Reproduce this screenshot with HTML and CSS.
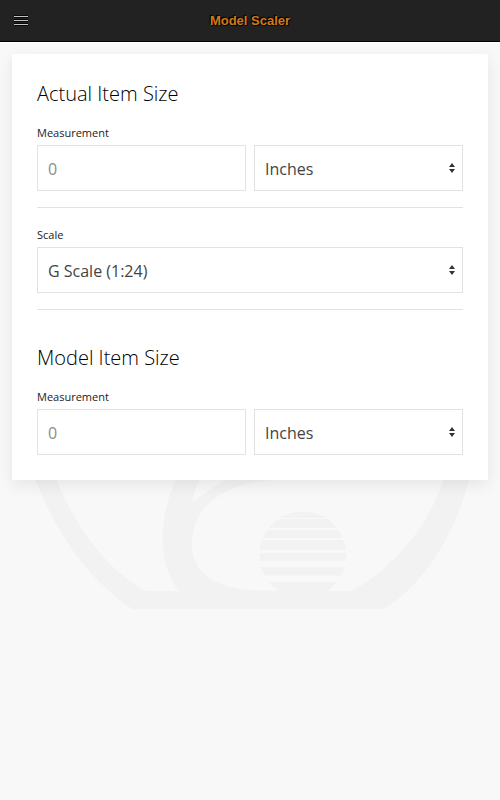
FILE: index.html
```html
<!DOCTYPE html>
<html lang="en">
<head>
<meta charset="utf-8">
<meta name="viewport" content="width=device-width, initial-scale=1">
<title>Model Scaler</title>
<link rel="stylesheet" href="styles.css">
</head>
<body>
<header class="navbar">
  <button class="menu" type="button" aria-label="Menu">
    <svg width="20" height="20" viewBox="0 0 20 20" aria-hidden="true">
      <path class="menu-edge" d="M3 4h14v3H3zM3 8h14v3H3zM3 12h14v3H3z"/>
      <path class="menu-line" d="M3 5h14v1H3zM3 9h14v1H3zM3 13h14v1H3z"/>
    </svg>
  </button>
  <h1 class="brand">Model Scaler</h1>
</header>
<main class="page">
  <svg class="emblem" width="500" height="140" viewBox="0 470 500 140" aria-hidden="true">
    <defs><clipPath id="stripes"><path d="M255 510h100v8H255zM255 519h100v9H255zM255 530h100v8H255zM255 540h100v10H255zM255 553h100v8H255zM255 567h100v8.500H255zM255 582h100v9H255z"/></clipPath></defs>
    <path fill-rule="evenodd" d="M32 470C50 523 84 577 132 609H384C426 583 459 529 471 470H446C433 521 399 562 357 588Q354 591 349 591H276C265 590 257 590 250 590C218 588 192 574 192 545C192 506 222 484 272 480L290 470H204Q195 486 192 503C205 492 216 485 228 479L240 470H182C160 502 154 562 179 591H149Q144 591 139 587C102 564 70 519 53 470Z"/>
    <circle cx="303" cy="555" r="43.500" clip-path="url(#stripes)"/>
  </svg>
  <form class="card">
    <section>
      <h2>Actual Item Size</h2>
      <label for="actual">Measurement</label>
      <div class="row">
        <input class="field" id="actual" type="text" inputmode="decimal" placeholder="0">
        <div class="select">
          <select class="field" aria-label="Actual unit"><option>Inches</option><option>Feet</option><option>Centimeters</option></select>
          <svg class="arrows" width="6" height="12" viewBox="0 0 6 12" aria-hidden="true"><path d="M3 1 0 5h6zM3 11 0 7h6z"/></svg>
        </div>
      </div>
    </section>
    <hr>
    <section>
      <label for="scale">Scale</label>
      <div class="select">
        <select class="field" id="scale"><option>G Scale (1:24)</option><option>O Scale (1:48)</option><option>HO Scale (1:87)</option></select>
        <svg class="arrows" width="6" height="12" viewBox="0 0 6 12" aria-hidden="true"><path d="M3 1 0 5h6zM3 11 0 7h6z"/></svg>
      </div>
    </section>
    <hr>
    <section class="result">
      <h2>Model Item Size</h2>
      <label for="model">Measurement</label>
      <div class="row">
        <input class="field" id="model" type="text" placeholder="0" readonly>
        <div class="select">
          <select class="field" aria-label="Model unit"><option>Inches</option><option>Feet</option><option>Centimeters</option></select>
          <svg class="arrows" width="6" height="12" viewBox="0 0 6 12" aria-hidden="true"><path d="M3 1 0 5h6zM3 11 0 7h6z"/></svg>
        </div>
      </div>
    </section>
  </form>
</main>
</body>
</html>
```
FILE: styles.css
```css
* { box-sizing: border-box; }
body {
  min-height: 100vh;
  margin: 0;
  background: #f8f8f8;
  color: #000;
  font-family: "Segoe UI", "Open Sans", sans-serif;
}
.navbar {
  display: grid;
  grid-template-columns: 40px 1fr 40px;
  align-items: center;
  height: 42px;
  background: #222;
  border-bottom: 1px solid #000;
  box-shadow: 0 1px 0 #fff;
}
.menu {
  display: flex;
  margin: 0 0 0 11px;
  padding: 0;
  border: 0;
  background: none;
  cursor: pointer;
}
.menu-edge { fill: #080808; }
.menu-line { fill: #c4c4c4; }
.brand {
  margin: 0;
  color: #d17a1c;
  font: bold 13px/20px "Liberation Sans", Arial, sans-serif;
  text-align: center;
  text-shadow: 1px 1px 1px #000, -1px -1px 1px #000;
}
.page {
  position: relative;
  padding: 12px;
}
.emblem {
  position: absolute;
  top: 428px;
  left: 50%;
  margin-left: -250px;
  fill: #f2f2f2;
}
.card {
  position: relative;
  padding: 25px;
  background: #fff;
  box-shadow: 0 5px 15px rgba(0, 0, 0, 0.08);
}
h2 {
  margin: 0 0 15px;
  font-size: 20px;
  font-weight: 300;
  line-height: 30px;
}
label {
  display: block;
  margin-bottom: 3px;
  color: #222;
  font-size: 11px;
  line-height: 18px;
}
.row {
  display: grid;
  grid-template-columns: 1fr 1fr;
  gap: 8px;
}
.select { position: relative; }
.field {
  display: block;
  width: 100%;
  height: 46px;
  margin: 0;
  padding: 2px 10px 0;
  border: 1px solid #e2e2e2;
  border-radius: 0;
  background: #fff;
  color: #444;
  font: 16px/24px "Segoe UI", "Open Sans", sans-serif;
  appearance: none;
}
.field::placeholder { color: #8c8c8c; opacity: 1; }
.field:focus { outline: 0; border-color: #1e87f0; }
.arrows {
  position: absolute;
  top: 17px;
  right: 8px;
  fill: #333;
  pointer-events: none;
}
hr {
  height: 1px;
  margin: 16px 0 18px;
  border: 0;
  background: #e2e2e2;
}
.result { padding-top: 15px; }
```
